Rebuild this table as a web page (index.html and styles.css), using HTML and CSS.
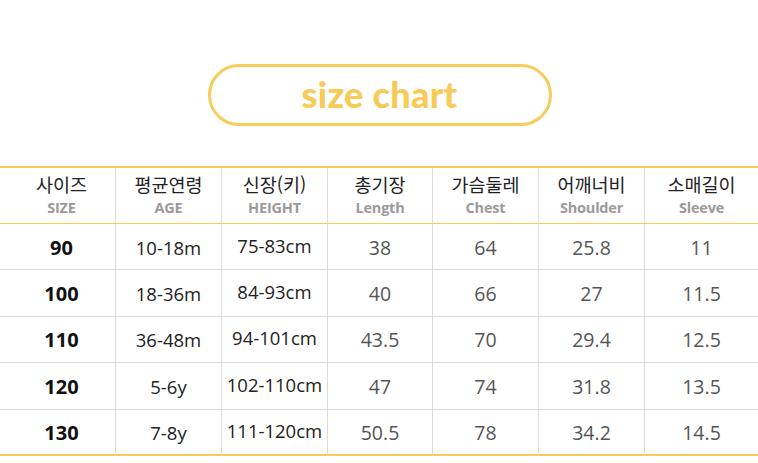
FILE: index.html
```html
<!DOCTYPE html>
<html lang="ko">
<head>
<meta charset="utf-8">
<link rel="stylesheet" href="styles.css">
</head>
<body>
<div class="title-wrap">
  <div class="pill">size chart</div>
</div>
<div class="chart">
  <div class="cell head first"><span class="ko">사이즈</span><span class="en">SIZE</span></div>
  <div class="cell head"><span class="ko">평균연령</span><span class="en">AGE</span></div>
  <div class="cell head"><span class="ko">신장(키)</span><span class="en">HEIGHT</span></div>
  <div class="cell head"><span class="ko">총기장</span><span class="en">Length</span></div>
  <div class="cell head"><span class="ko">가슴둘레</span><span class="en">Chest</span></div>
  <div class="cell head"><span class="ko">어깨너비</span><span class="en">Shoulder</span></div>
  <div class="cell head last"><span class="ko">소매길이</span><span class="en">Sleeve</span></div>

  <div class="cell size first">90</div><div class="cell dark">10-18m</div><div class="cell dark tall">75-83cm</div><div class="cell">38</div><div class="cell">64</div><div class="cell">25.8</div><div class="cell last">11</div>
  <div class="cell size first">100</div><div class="cell dark">18-36m</div><div class="cell dark tall">84-93cm</div><div class="cell">40</div><div class="cell">66</div><div class="cell">27</div><div class="cell last">11.5</div>
  <div class="cell size first">110</div><div class="cell dark">36-48m</div><div class="cell dark tall">94-101cm</div><div class="cell">43.5</div><div class="cell">70</div><div class="cell">29.4</div><div class="cell last">12.5</div>
  <div class="cell size first">120</div><div class="cell dark">5-6y</div><div class="cell dark tall">102-110cm</div><div class="cell">47</div><div class="cell">74</div><div class="cell">31.8</div><div class="cell last">13.5</div>
  <div class="cell size first bottom">130</div><div class="cell dark bottom">7-8y</div><div class="cell dark tall bottom">111-120cm</div><div class="cell bottom">50.5</div><div class="cell bottom">78</div><div class="cell bottom">34.2</div><div class="cell last bottom">14.5</div>
</div>
</body>
</html>
```
FILE: styles.css
```css
html, body {
  margin: 0;
  padding: 0;
  background: #ffffff;
}
body {
  font-family: "Open Sans", "Noto Sans CJK KR", sans-serif;
  width: 758px;
  height: 463px;
  overflow: hidden;
}
.title-wrap {
  padding-top: 64px;
  display: flex;
  justify-content: center;
  padding-left: 1px;
}
.pill {
  box-sizing: border-box;
  width: 344px;
  height: 62px;
  border: 3px solid #f6cd5c;
  border-radius: 31px;
  display: flex;
  align-items: center;
  justify-content: center;
  color: #f6cb58;
  font-family: "Lato", sans-serif;
  font-weight: 900;
  font-size: 36px;
  letter-spacing: 0.3px;
  padding-bottom: 2px;
}
.chart {
  margin-top: 40px;
  border-top: 2px solid #f6cb58;
  display: grid;
  grid-template-columns: 116px 106px 106px 105px 106px 106px 1fr;
  grid-template-rows: 56px repeat(5, 46.4px);
}
.cell {
  box-sizing: border-box;
  border-right: 1px solid #dcdcdc;
  border-bottom: 1px solid #dcdcdc;
  display: flex;
  align-items: center;
  justify-content: center;
  font-size: 19.5px;
  color: #555555;
  padding-top: 1px;
}
.cell.first {
  padding-left: 8px;
}
.cell.last {
  border-right: none;
}
.cell.head {
  flex-direction: column;
  border-bottom: 1px solid #f6cb58;
  padding-top: 0;
  padding-bottom: 1px;
  gap: 4px;
}
.ko {
  font-family: "Noto Sans CJK KR", sans-serif;
  font-size: 18.5px;
  line-height: 21px;
  color: #222222;
}
.en {
  font-family: "Open Sans", sans-serif;
  font-weight: 700;
  font-size: 14.5px;
  line-height: 17px;
  color: #9a9a9a;
  letter-spacing: -0.2px;
}
.cell.size {
  font-weight: 700;
  font-size: 20px;
  color: #111111;
}
.cell.dark {
  font-size: 18.5px;
  color: #222222;
}
.cell.tall {
  padding-top: 0;
  padding-bottom: 3px;
}
.cell.bottom {
  border-bottom: 2px solid #f6cb58;
}
```
